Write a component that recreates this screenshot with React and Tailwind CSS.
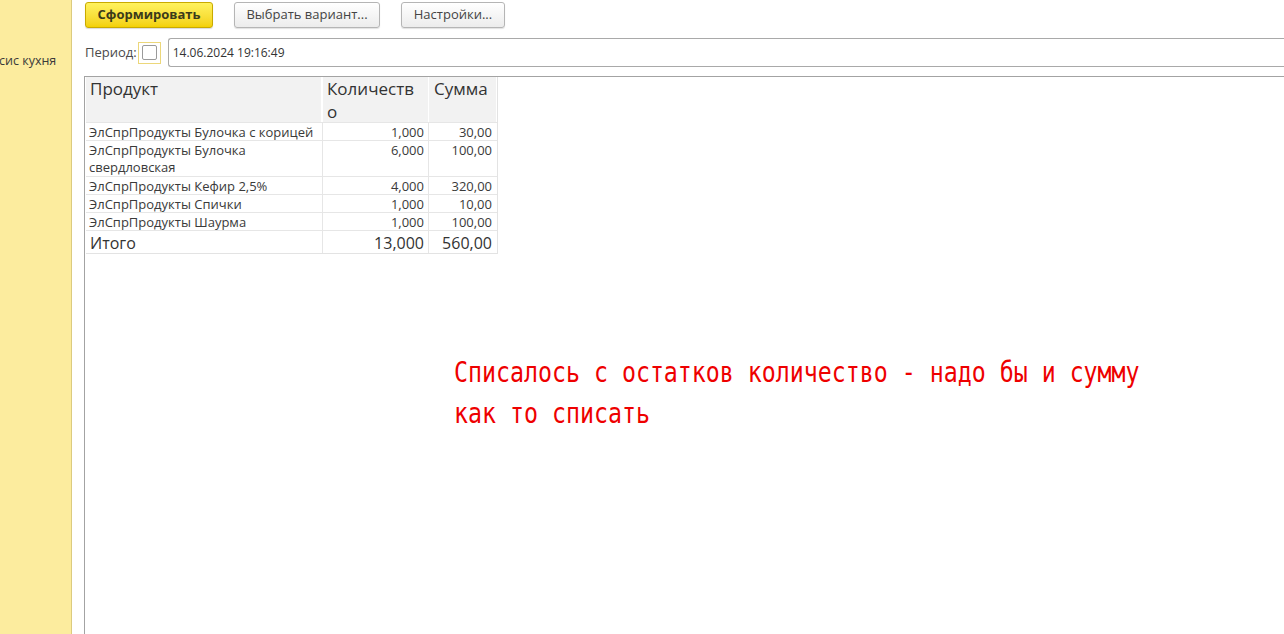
export default function App() {
  const rows = [
    { name: "ЭлСпрПродукты Булочка с корицей", qty: "1,000", sum: "30,00", h: "h-[18px]" },
    { name: "ЭлСпрПродукты Булочка свердловская", qty: "6,000", sum: "100,00", h: "h-[36px]" },
    { name: "ЭлСпрПродукты Кефир 2,5%", qty: "4,000", sum: "320,00", h: "h-[18px]" },
    { name: "ЭлСпрПродукты Спички", qty: "1,000", sum: "10,00", h: "h-[18px]" },
    { name: "ЭлСпрПродукты Шаурма", qty: "1,000", sum: "100,00", h: "h-[18px]" },
  ];
  return (
    <div className="flex h-[634px] w-[1284px] overflow-hidden bg-white font-['Open_Sans',sans-serif] text-[#333]">
      <div className="w-[72px] shrink-0 border-r border-[#dccb7f] bg-[#fcec9e] pt-[52px]">
        <div className="-ml-[1px] whitespace-nowrap text-[12.5px] leading-[18px] text-[#3a3a3a]">сис кухня</div>
      </div>
      <div className="flex min-w-0 flex-1 flex-col">
        <div className="flex h-[38px] items-start gap-[21px] pl-[13px] pt-[2px]">
          <button className="flex h-[26px] w-[128px] items-center justify-center rounded-[3px] border border-[#c9aa00] bg-gradient-to-b from-[#fff25c] to-[#f3d100] text-[13px] font-bold text-[#3b3b1a] shadow-[0_1px_1px_rgba(0,0,0,0.15)]">
            Сформировать
          </button>
          <button className="flex h-[26px] w-[146px] items-center justify-center rounded-[3px] border border-[#b5b5b5] bg-gradient-to-b from-white to-[#ececec] text-[13px] text-[#444] shadow-[0_1px_1px_rgba(0,0,0,0.12)]">
            Выбрать вариант...
          </button>
          <button className="flex h-[26px] w-[104px] items-center justify-center rounded-[3px] border border-[#b5b5b5] bg-gradient-to-b from-white to-[#ececec] text-[13px] text-[#444] shadow-[0_1px_1px_rgba(0,0,0,0.12)]">
            Настройки...
          </button>
        </div>
        <div className="flex h-[29px] items-center pl-[13px]">
          <span className="text-[13px] text-[#4a4a4a]">Период:</span>
          <div className="ml-[1px] flex h-[22px] w-[23px] items-center justify-center border border-[#ecd77a]">
            <div className="h-[15px] w-[15px] rounded-[2px] border border-[#9a9a9a] bg-white"></div>
          </div>
          <div className="ml-[7px] flex h-[29px] flex-1 items-center rounded-l-[3px] border border-r-0 border-[#a9a9a9] pl-[4px] text-[12px] text-[#333]">
            14.06.2024 19:16:49
          </div>
        </div>
        <div className="mt-[9px] ml-[12px] flex-1 border-l border-t border-[#a3a3a3] pl-[1px]">
          <div className="w-[412px] border-r border-b border-[#e3e3e3]">
            <div className="flex h-[46px] border-b border-[#e6e6e6] text-[17px] leading-[23px] text-[#333]">
              <div className="w-[237px] border-r-2 border-white bg-[#f2f2f2] pl-[4px]">Продукт</div>
              <div className="w-[106px] break-all border-r border-white bg-[#f2f2f2] pl-[4px] pr-[10px]">Количество</div>
              <div className="w-[67px] bg-[#f2f2f2] pl-[5px]">Сумма</div>
            </div>
            {rows.map((r) => (
              <div key={r.name} className={`${r.h} flex border-b border-[#e6e6e6] pt-[1px] text-[13px] leading-[17px] text-[#3a3a3a]`}>
                <div className="-mt-[1px] w-[237px] border-r border-[#e6e6e6] pl-[3px] pt-[1px]">{r.name}</div>
                <div className="-mt-[1px] w-[106px] border-r border-[#e6e6e6] pr-[4px] pt-[1px] text-right">{r.qty}</div>
                <div className="w-[67px] pr-[4px] text-right">{r.sum}</div>
              </div>
            ))}
            <div className="flex h-[22px] text-[16px] leading-[24px] text-[#333]">
              <div className="w-[237px] border-r border-[#e6e6e6] pl-[4px]">Итого</div>
              <div className="w-[106px] border-r border-[#e6e6e6] pr-[4px] text-right">13,000</div>
              <div className="w-[67px] pr-[4px] text-right">560,00</div>
            </div>
          </div>
          <div className="ml-[368px] mt-[98px] origin-left scale-x-[0.83] whitespace-nowrap font-['DejaVu_Sans_Mono',monospace] text-[28px] leading-[41px] text-[#ee0000]">
            Списалось с остатков количество - надо бы и сумму
            <br />
            как то списать
          </div>
        </div>
      </div>
    </div>
  );
}
